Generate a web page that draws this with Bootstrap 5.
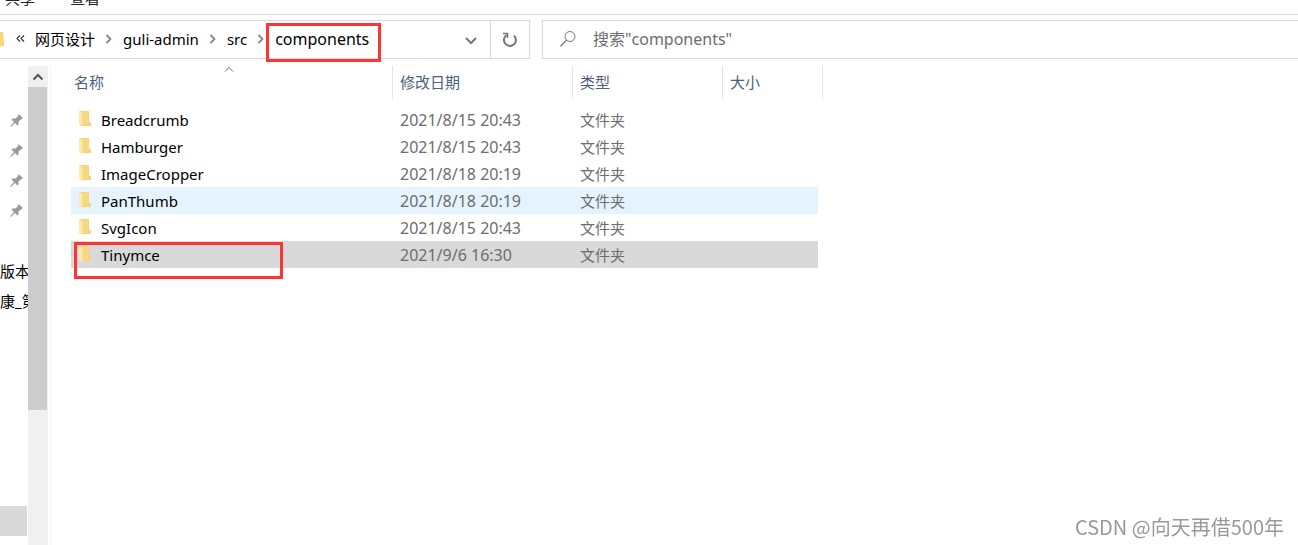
<!DOCTYPE html>
<html lang="zh-CN">
<head>
<meta charset="utf-8">
<meta name="viewport" content="width=device-width, initial-scale=1">
<title>components</title>
<link href="https://cdn.jsdelivr.net/npm/bootstrap@5.3.0/dist/css/bootstrap.min.css" rel="stylesheet">
<style>
  body { font: 15px/20px "Noto Sans", "Noto Sans CJK SC", sans-serif; color: #000; background: #fff; }
  button, input { font: inherit; }
  .plain { border: 0; background: none; padding: 0; color: inherit; }
  .ribbon { height: 15px; border-bottom: 1px solid #d9d9d9; padding: 0 0 6px 5px; gap: 35px; color: #222; }
  .toolbar-row { margin-top: 5px; gap: 12px; }
  .address { flex: 0 0 530px; height: 39px; border: 1px solid #d9d9d9; border-left: 0; }
  .crumbs { gap: 10px; padding-bottom: 2px; }
  .crumbs a { color: #000; text-decoration: none; }
  .crumbs .current { font-size: 16px; }
  .overflow-mark { margin-left: 2px; }
  .tool { width: 39px; }
  .refresh { border-left: 1px solid #d9d9d9; padding-bottom: 2px; }
  .search { height: 39px; border: 1px solid #d9d9d9; border-right: 0; padding: 0 0 2px 17px; gap: 17px; }
  .search input { border: 0; outline: 0; padding: 0; font-size: 16px; color: #6d6d6d; }
  .search input::placeholder { color: #6d6d6d; opacity: 1; }
  .marker { position: absolute; border: 3px solid #fc3535; pointer-events: none; }
  .marker-crumb { inset: -6px -12px -13px -9px; }
  .marker-file { left: 3px; top: 1px; width: 209px; height: 37px; z-index: 1; }
  .main-area { margin-top: 7px; }
  .side { width: 28px; white-space: nowrap; padding-top: 40px; }
  .side-item { height: 30px; }
  .pin { padding-left: 10px; }
  .side-label { margin-top: 30px; }
  .side-block { width: 27px; height: 30px; background: #d9d9d9; margin-bottom: 9px; }
  .scroll-track { width: 20px; background: #f0f0f0; }
  .scroll-up { height: 21px; }
  .scroll-thumb { width: 19px; height: 323px; background: #cdcdcd; }
  .files-pane { margin-left: 2px; border-left: 1px solid #f5f5f5; padding-left: 20px; }
  .files { width: 752px; table-layout: fixed; border-collapse: separate; border-spacing: 0; }
  .files th { position: relative; height: 33px; padding: 0 0 2px 7px; font-weight: 400; color: #4c607a; border-right: 1px solid #e5e5e5; }
  .files th:first-child { padding-left: 3px; }
  .files td { height: 27px; padding: 0 0 0 7px; color: #6d6d6d; }
  .files td:first-child { position: relative; padding-left: 8px; color: #000; }
  .files td:nth-child(2) { font-size: 16px; }
  .files td:last-child { border-right: 5px solid transparent; background-clip: padding-box; }
  .files .gap-row td { height: 7px; }
  .files .hovered td { background-color: #e5f3ff; }
  .files .picked td { background-color: #d9d9d9; }
  .sort { position: absolute; left: 153px; top: 0; }
  .file-name { gap: 9px; }
  .watermark { position: fixed; right: 14px; bottom: 6px; font: 20px/24px "Noto Sans CJK SC", sans-serif; color: #999; }
</style>
</head>
<body class="d-flex flex-column vh-100 overflow-hidden">
<svg class="d-none">
  <symbol id="folder" viewBox="0 0 13 17">
    <path d="M0 0h10v10.500l2 1V15H2V1H0z" fill="#f5d27c"/>
    <path d="M4 1h5v13H4z" fill="#f9d97f"/>
    <path d="M0 0 3.500 2v14.500L0 14z" fill="#fde9ae"/>
  </symbol>
  <symbol id="pin" viewBox="0 0 14 14">
    <path d="M8.500 0 13 4l-2 1.500-2.500 2v3l-1 1L5 9l-3.500 3.500H0L4 8 1.500 5.500l1-1h3L8 2z" fill="#929ca5"/>
  </symbol>
  <symbol id="chev" viewBox="0 0 8 10"><path d="m1.500 1 4 4-4 4" fill="none" stroke="#888" stroke-width="1.800"/></symbol>
</svg>

<nav class="ribbon d-flex align-items-end overflow-hidden flex-shrink-0">
  <button class="plain" type="button">共享</button>
  <button class="plain" type="button">查看</button>
</nav>

<header class="toolbar-row d-flex flex-shrink-0">
  <div class="address d-flex">
    <nav class="crumbs d-flex align-items-center flex-grow-1" aria-label="路径">
      <svg width="4" height="16" aria-hidden="true"><path d="M0 1h3l1 12v2H0z" fill="#fbd876"/></svg>
      <svg width="9" height="10" viewBox="0 0 9 10" class="overflow-mark" aria-hidden="true"><path d="M4 1.500 1 4.500l3 3M8 1.500 5 4.500l3 3" fill="none" stroke="#333" stroke-width="1.200"/></svg>
      <a href="#">网页设计</a>
      <svg width="8" height="10" aria-hidden="true"><use href="#chev"/></svg>
      <a href="#">guli-admin</a>
      <svg width="8" height="10" aria-hidden="true"><use href="#chev"/></svg>
      <a href="#">src</a>
      <svg width="8" height="10" aria-hidden="true"><use href="#chev"/></svg>
      <a href="#" class="current position-relative">components<span class="marker marker-crumb"></span></a>
    </nav>
    <button class="plain tool" type="button" aria-label="历史记录"><svg width="12" height="8"><path d="m1 1 5 5 5-5" fill="none" stroke="#777" stroke-width="2"/></svg></button>
    <button class="plain tool refresh" type="button" aria-label="刷新"><svg width="16" height="16" viewBox="0 0 16 16"><path d="M12 3.500A6 6 0 1 1 4.500 3" fill="none" stroke="#777" stroke-width="2"/><path d="M1 1.500H5.500V6" fill="none" stroke="#777" stroke-width="1.600"/></svg></button>
  </div>
  <label class="search d-flex align-items-center flex-grow-1">
    <svg width="16" height="16" viewBox="0 0 16 16" aria-hidden="true"><circle cx="10" cy="5.500" r="5" fill="none" stroke="#777"/><path d="M6.500 9 .5 15.500" stroke="#777" stroke-width="1.200"/></svg>
    <input class="flex-grow-1" type="text" placeholder='搜索"components"' aria-label="搜索">
  </label>
</header>

<main class="main-area d-flex flex-grow-1 overflow-hidden">
  <aside class="side d-flex flex-column overflow-hidden flex-shrink-0">
    <div class="side-item pin d-flex align-items-center"><svg width="14" height="14"><use href="#pin"/></svg></div>
    <div class="side-item pin d-flex align-items-center"><svg width="14" height="14"><use href="#pin"/></svg></div>
    <div class="side-item pin d-flex align-items-center"><svg width="14" height="14"><use href="#pin"/></svg></div>
    <div class="side-item pin d-flex align-items-center"><svg width="14" height="14"><use href="#pin"/></svg></div>
    <div class="side-item side-label d-flex align-items-center">版本</div>
    <div class="side-item d-flex align-items-center">康_第</div>
    <div class="side-block mt-auto flex-shrink-0"></div>
  </aside>
  <div class="scroll-track flex-shrink-0">
    <div class="scroll-up d-flex align-items-center justify-content-center"><svg width="12" height="8"><path d="m1.500 6.500 4.500-4.500 4.500 4.500" fill="none" stroke="#555" stroke-width="2"/></svg></div>
    <div class="scroll-thumb"></div>
  </div>
  <section class="files-pane flex-grow-1">
    <table class="files">
      <colgroup><col style="width:322px"><col style="width:180px"><col style="width:150px"><col style="width:100px"></colgroup>
      <thead><tr>
        <th scope="col">名称<svg class="sort" width="10" height="7"><path d="m1 5.500 4-4 4 4" fill="none" stroke="#666"/></svg></th>
        <th scope="col">修改日期</th><th scope="col">类型</th><th scope="col">大小</th>
      </tr></thead>
      <tbody>
        <tr class="gap-row" aria-hidden="true"><td colspan="4"></td></tr>
        <tr><td><div class="file-name d-flex align-items-center"><svg width="13" height="17"><use href="#folder"/></svg>Breadcrumb</div></td><td>2021/8/15 20:43</td><td>文件夹</td><td></td></tr>
        <tr><td><div class="file-name d-flex align-items-center"><svg width="13" height="17"><use href="#folder"/></svg>Hamburger</div></td><td>2021/8/15 20:43</td><td>文件夹</td><td></td></tr>
        <tr><td><div class="file-name d-flex align-items-center"><svg width="13" height="17"><use href="#folder"/></svg>ImageCropper</div></td><td>2021/8/18 20:19</td><td>文件夹</td><td></td></tr>
        <tr class="hovered"><td><div class="file-name d-flex align-items-center"><svg width="13" height="17"><use href="#folder"/></svg>PanThumb</div></td><td>2021/8/18 20:19</td><td>文件夹</td><td></td></tr>
        <tr><td><div class="file-name d-flex align-items-center"><svg width="13" height="17"><use href="#folder"/></svg>SvgIcon</div></td><td>2021/8/15 20:43</td><td>文件夹</td><td></td></tr>
        <tr class="picked"><td><div class="file-name d-flex align-items-center"><svg width="13" height="17"><use href="#folder"/></svg>Tinymce</div><span class="marker marker-file"></span></td><td>2021/9/6 16:30</td><td>文件夹</td><td></td></tr>
      </tbody>
    </table>
  </section>
</main>
<div class="watermark">CSDN @向天再借500年</div>
<script src="https://cdn.jsdelivr.net/npm/bootstrap@5.3.0/dist/js/bootstrap.bundle.min.js"></script>
</body>
</html>
